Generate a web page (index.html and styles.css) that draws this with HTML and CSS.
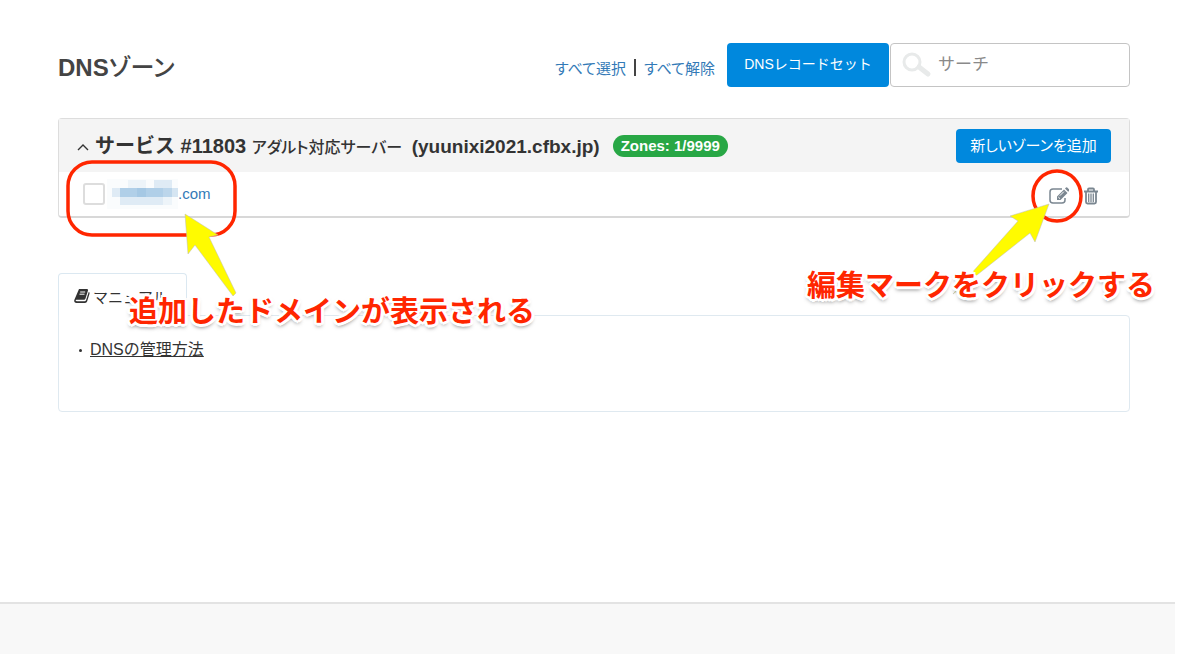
FILE: index.html
```html
<!DOCTYPE html>
<html lang="ja">
<head>
    <meta charset="UTF-8">
    <meta name="viewport" content="width=device-width, initial-scale=1.0">
    <title>DNSゾーン</title>
    <link rel="stylesheet" href="styles.css">
</head>
<body>
    <main>
        <header class="toolbar">
            <h1>DNS<span>ゾーン</span></h1>
            <div class="select-links">
                <a href="#">すべて選択</a>
                <span class="divider"></span>
                <a href="#">すべて解除</a>
            </div>
            <button type="button" class="btn btn-record">DNSレコードセット</button>
            <div class="search">
                <svg width="30" height="26" viewBox="0 0 30 26" aria-hidden="true">
                    <circle cx="10" cy="10" r="8" fill="none" stroke="#e8eaea" stroke-width="3"/>
                    <path d="M17 15l9 7" stroke="#e8eaea" stroke-width="5" stroke-linecap="round"/>
                </svg>
                <input type="text" placeholder="サーチ" aria-label="サーチ">
            </div>
        </header>

        <section class="panel">
            <div class="panel-heading">
                <svg class="chevron" width="12" height="8" viewBox="0 0 12 8" aria-hidden="true">
                    <path d="M1 7l5-5 5 5" fill="none" stroke="#333" stroke-width="1.4"/>
                </svg>
                <h2>サービス #11803 <small>アダルト対応サーバー</small> <span class="host">(yuunixi2021.cfbx.jp)</span></h2>
                <span class="badge">Zones: 1/9999</span>
                <button type="button" class="btn btn-add">新しいゾーンを追加</button>
            </div>
            <div class="zone-row">
                <div class="zone">
                    <input type="checkbox" id="zone1" aria-label=".com">
                    <a href="#">
                        <svg class="mosaic" width="71" height="30" viewBox="0 0 71 30" shape-rendering="crispEdges" aria-hidden="true">
                            <path d="M0 0h71v30H0z" fill="#fafcfd"/>
                            <path d="M5 9h8v9H5zM47 1h18v8H47zM13 18h43v8H13z" fill="#dfebf5"/>
                            <path d="M21 1h18v8H21zM56 18h9v8h-9z" fill="#edf4f9"/>
                            <path d="M13 9h52v9H13z" fill="#b0cfe8"/>
                            <path d="M30 9h9v9h-9z" fill="#a5c8e4"/>
                            <path d="M56 9h9v9h-9z" fill="#bcd6eb"/>
                            <path d="M65 9h6v9h-6z" fill="#d5e5f2"/>
                        </svg>.com</a>
                    <div class="note note-zone">
                        <svg width="180" height="140" viewBox="0 0 180 140" aria-hidden="true">
                            <rect x="4" y="3" width="167" height="73" rx="24" fill="none" stroke="#ff2600" stroke-width="3.5"/>
                            <path class="arrow" d="M121 55l33 21-9 2 27 56-3 3-38-51-7 9z"/>
                        </svg>
                        <p>追加したドメインが表示される</p>
                    </div>
                </div>
                <div class="actions">
                    <button type="button" aria-label="編集">
                        <svg width="20" height="18" viewBox="0 0 20 18" aria-hidden="true">
                            <path d="M13 2H4Q1 2 1 5v8q0 3 3 3h9q3 0 3-3v-2" fill="none" stroke="#7b8791" stroke-width="1.5"/>
                            <path d="M8 13V9.500l7-7 3.500 3.500-7 7zM16 1.500l1-1q.6-.5 1.200 0l2 2q.5.6 0 1.200l-1 1z" fill="#7b8791"/>
                            <path d="M9.300 10l1.700 1.700M10.800 8.700l4-4" stroke="#fff" stroke-width="1"/>
                        </svg>
                    </button>
                    <button type="button" aria-label="削除">
                        <svg width="16" height="18" viewBox="0 0 16 18" aria-hidden="true">
                            <path d="M1 4.500h14M5 4V2.500q0-1 1-1h4q1 0 1 1V4M3 4.500V15q0 1.500 1.500 1.500h7q1.500 0 1.500-1.500V4.500" fill="none" stroke="#7b8791" stroke-width="1.800"/>
                            <path d="M5.700 6.500V15M8 6.500V15M10.300 6.500V15" stroke="#7b8791" stroke-width="1.300"/>
                        </svg>
                    </button>
                    <div class="note note-edit">
                        <svg width="140" height="130" viewBox="0 0 140 130" aria-hidden="true">
                            <ellipse cx="106" cy="27" rx="24" ry="25" fill="none" stroke="#ff2600" stroke-width="3.500"/>
                            <path class="arrow" d="M98 35l-39 12 8 5L2 125l77-61 5 9z"/>
                        </svg>
                        <p>編集マークをクリックする</p>
                    </div>
                </div>
            </div>
        </section>

        <section class="manual">
            <h3 class="tab">
                <svg width="16" height="14" viewBox="0 0 16 14" aria-hidden="true">
                    <path d="M5 0h8q1.500 0 1 1.500l-2.500 8q-.4 1.200-1.500 1.200H2.500q-1.200 0-.8.8.2.700 1.300.7h7.500q1.200 0 1.600-1.200L14.700 3q1.300.2.800 1.800l-2.300 7.500Q12.700 14 11 14H2.500Q0 14 .2 11.300z" fill="#333"/>
                    <path d="M6.200 3h5M5.500 5.200h5" stroke="#fff" stroke-width="1"/>
                </svg>
                マニュアル
            </h3>
            <div class="manual-body">
                <ul>
                    <li><a href="#">DNSの管理方法</a></li>
                </ul>
            </div>
        </section>
    </main>
    <footer></footer>
</body>
</html>
```
FILE: styles.css
```css
* {
    box-sizing: border-box;
}
body {
    margin: 0 25px 0 0;
    min-height: 100vh;
    display: flex;
    flex-direction: column;
    background: #fff;
    color: #333;
    font-family: "Liberation Sans", "Noto Sans CJK JP", sans-serif;
    font-size: 15px;
}
main {
    flex: 1;
    padding: 43px 45px 0 58px;
}
a {
    color: #337ab7;
    text-decoration: none;
}
h1, h2, h3, p, ul {
    margin: 0;
    padding: 0;
}
button {
    font-family: inherit;
    cursor: pointer;
}

/* top bar */
.toolbar {
    display: flex;
    align-items: center;
    height: 44px;
}
h1 {
    margin-right: auto;
    padding-top: 6px;
    font-size: 24px;
    line-height: 30px;
    color: #444;
    font-feature-settings: "palt";
}
h1 span {
    font-weight: 500;
}
.select-links {
    display: flex;
    align-items: center;
    gap: 8px;
    margin-right: 12px;
    padding-top: 4px;
    font-size: 15px;
    font-feature-settings: "palt";
}
.divider {
    width: 2px;
    height: 17px;
    background: #444;
}
.btn {
    border: 0;
    border-radius: 4px;
    background: #0088dd;
    color: #fff;
}
.btn-record {
    width: 162px;
    height: 44px;
    margin-right: 1px;
    padding: 0 0 4px;
    font-size: 14px;
}
.search {
    display: flex;
    align-items: center;
    width: 240px;
    height: 44px;
    padding: 0 10px 0 11px;
    border: 1px solid #c4c4c4;
    border-radius: 4px;
}
.search svg {
    flex: none;
}
.search input {
    flex: 1;
    min-width: 0;
    padding: 0 6px;
    border: 0;
    outline: 0;
    background: none;
    font-family: inherit;
    font-size: 17px;
}
.search input::placeholder {
    color: #8a8a8a;
}

/* service panel */
.panel {
    margin-top: 31px;
    border: 1px solid #ddd;
    border-bottom: 2px solid #d8d8d8;
    border-radius: 4px;
}
.panel-heading {
    display: flex;
    align-items: center;
    height: 53px;
    padding: 0 18px;
    background: #f4f4f4;
}
.chevron {
    margin: 2px 6px 0 0;
}
h2 {
    padding-top: 2px;
    font-size: 20px;
    line-height: 28px;
    white-space: nowrap;
}
h2 small {
    font-size: 16px;
    font-weight: 500;
    font-feature-settings: "palt";
}
.host {
    margin-left: 4px;
    font-size: 19px;
}
.badge {
    margin-left: 13px;
    padding: 0 8px;
    border-radius: 11px;
    background: #28a745;
    color: #fff;
    font-size: 15px;
    font-weight: bold;
    line-height: 22px;
}
.btn-add {
    width: 155px;
    height: 34px;
    margin-left: auto;
    padding: 0 0 2px;
    font-size: 15px;
    font-feature-settings: "palt";
}
.zone-row {
    display: flex;
    align-items: center;
    justify-content: space-between;
    height: 44px;
    padding: 0 30px 0 24px;
}
.zone {
    position: relative;
    display: flex;
    align-items: center;
}
.zone input {
    appearance: none;
    width: 22px;
    height: 22px;
    margin: 0 2px 0 0;
    border: 2px solid #ddd;
    border-radius: 3px;
    background: #fff;
}
.zone a {
    display: flex;
    align-items: center;
    line-height: 30px;
}
.actions {
    position: relative;
    display: flex;
    align-items: center;
    gap: 14px;
    padding-top: 3px;
}
.actions button {
    display: flex;
    padding: 0;
    border: 0;
    background: none;
}

/* hand-drawn notes over the table */
.note {
    position: absolute;
    pointer-events: none;
}
.note svg {
    display: block;
}
.note p {
    position: absolute;
    color: #ff2600;
    font-size: 29px;
    font-weight: bold;
    line-height: 40px;
    white-space: nowrap;
    text-shadow: 2px 0 #fff, -2px 0 #fff, 0 2px #fff, 0 -2px #fff, 2px 2px #fff, -2px 2px #fff, 2px -2px #fff, -2px -2px #fff, 3px 1px #fff, -3px 1px #fff, 0 3px #fff, 0 -3px #fff, 0 3px 4px #666;
}
.arrow {
    fill: #fffb00;
    stroke: #bbb;
    stroke-width: 0.5;
}
.note-zone {
    top: -20px;
    left: -19px;
}
.note-zone p {
    top: 133px;
    left: 65px;
}
.note-edit {
    top: -15px;
    right: 0;
    width: 148px;
}
.note-edit p {
    top: 97px;
    left: -144px;
}

/* manual */
.manual {
    margin-top: 55px;
}
.tab {
    display: flex;
    align-items: center;
    gap: 3px;
    position: relative;
    z-index: -1;
    width: 129px;
    height: 43px;
    margin-bottom: -1px;
    padding: 2px 0 0 15px;
    border: 1px solid #dbe8f1;
    border-bottom: 0;
    border-radius: 4px 4px 0 0;
    background: #fff;
    font-size: 15px;
    font-weight: normal;
}
.manual-body {
    min-height: 97px;
    padding: 22px 20px;
    border: 1px solid #dfe9f0;
    border-radius: 0 4px 4px 4px;
}
/* the part of the frame under the tab stays open */
.manual-body::before {
    content: "";
    display: block;
    width: 127px;
    height: 1px;
    margin: -23px 0 22px -20px;
    background: #fff;
}
.manual ul {
    list-style: none;
}
.manual li {
    font-size: 16px;
    line-height: 24px;
}
.manual li::before {
    content: "";
    display: inline-block;
    width: 3px;
    height: 3px;
    margin-right: 8px;
    border-radius: 50%;
    background: #333;
    vertical-align: middle;
}
.manual li a {
    color: #333;
    text-decoration: underline;
}
footer {
    height: 52px;
    border-top: 2px solid #e3e3e3;
    background: #f8f8f8;
}
```
